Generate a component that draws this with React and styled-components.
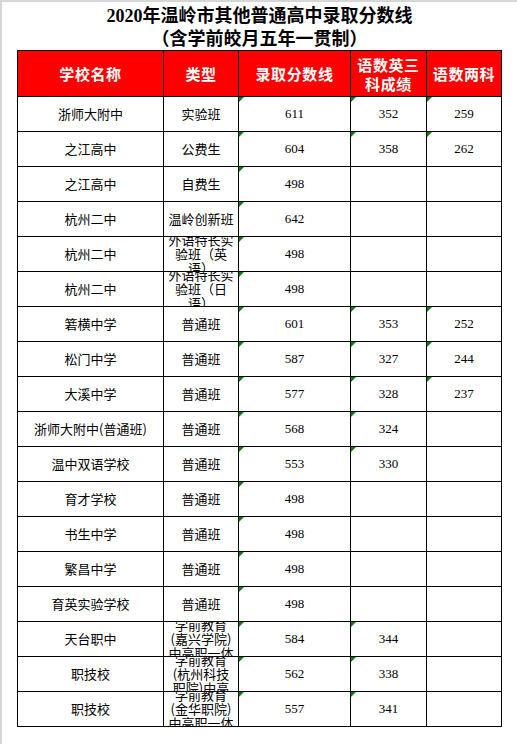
import styled, { createGlobalStyle } from 'styled-components';

const GlobalStyle = createGlobalStyle`
  html, body {
    margin: 0;
    background: #fff;
  }
  body {
    font-family: 'Noto Sans CJK SC', sans-serif;
  }
`;

const Page = styled.div`
  width: 517px;
  height: 744px;
  box-sizing: border-box;
  border-top: 2px solid #d6d6d6;
  border-left: 2px solid #d6d6d6;
  padding-left: 15px;
  background: #fff;
`;

const Title = styled.div`
  width: 485px;
  height: 48px;
  padding-top: 3px;
  box-sizing: border-box;
  text-align: center;
  font-family: 'Liberation Serif', 'Noto Sans CJK SC', serif;
  font-weight: bold;
  font-size: 18px;
  line-height: 23px;
  color: #000;
`;

const Sheet = styled.div`
  display: grid;
  width: 485px;
  box-sizing: border-box;
  grid-template-columns: 146px 75px 112px 76px 75px;
  grid-template-rows: 46px repeat(18, 35px);
  border-top: 1px solid #000;
  border-left: 1px solid #000;
`;

const HeadCell = styled.div`
  display: flex;
  flex-direction: column;
  align-items: center;
  justify-content: center;
  box-sizing: border-box;
  border-right: 1px solid #000;
  border-bottom: 1px solid #000;
  background: #ff0000;
  color: #fff;
  font-weight: bold;
  font-size: 15px;
  letter-spacing: 0.6px;
  line-height: 19px;
  text-align: center;
`;

const Cell = styled.div`
  position: relative;
  overflow: hidden;
  display: flex;
  flex-direction: column;
  align-items: center;
  justify-content: center;
  box-sizing: border-box;
  border-right: 1px solid #000;
  border-bottom: 1px solid #000;
  color: #000;
  font-family: ${(p) => (p.$num ? "'Liberation Serif', serif" : "'Noto Sans CJK SC', sans-serif")};
  font-size: 13px;
  line-height: 14px;

  &::before {
    content: '';
    display: ${(p) => (p.$flag ? 'block' : 'none')};
    position: absolute;
    top: 0;
    left: 0;
    border-top: 5px solid #0a7f0a;
    border-right: 5px solid transparent;
  }
`;

const Line = styled.span`
  display: block;
  white-space: nowrap;
`;

const rows = [
  { school: '浙师大附中', type: ['实验班'], score: '611', three: '352', two: '259' },
  { school: '之江高中', type: ['公费生'], score: '604', three: '358', two: '262' },
  { school: '之江高中', type: ['自费生'], score: '498' },
  { school: '杭州二中', type: ['温岭创新班'], score: '642' },
  { school: '杭州二中', type: ['外语特长实', '验班（英', '语）'], score: '498' },
  { school: '杭州二中', type: ['外语特长实', '验班（日', '语）'], score: '498' },
  { school: '箬横中学', type: ['普通班'], score: '601', three: '353', two: '252' },
  { school: '松门中学', type: ['普通班'], score: '587', three: '327', two: '244' },
  { school: '大溪中学', type: ['普通班'], score: '577', three: '328', two: '237' },
  { school: '浙师大附中(普通班)', type: ['普通班'], score: '568', three: '324' },
  { school: '温中双语学校', type: ['普通班'], score: '553', three: '330' },
  { school: '育才学校', type: ['普通班'], score: '498' },
  { school: '书生中学', type: ['普通班'], score: '498' },
  { school: '繁昌中学', type: ['普通班'], score: '498' },
  { school: '育英实验学校', type: ['普通班'], score: '498' },
  { school: '天台职中', type: ['学前教育', '(嘉兴学院)', '中高职一体'], score: '584', three: '344' },
  { school: '职技校', type: ['学前教育', '(杭州科技', '职院)中高'], score: '562', three: '338' },
  { school: '职技校', type: ['学前教育', '(金华职院)', '中高职一体'], score: '557', three: '341' },
];

const App = () => {
  return (
    <Page>
      <GlobalStyle />
      <Title>
        2020年温岭市其他普通高中录取分数线
        <br />
        （含学前皎月五年一贯制）
      </Title>
      <Sheet>
        <HeadCell>学校名称</HeadCell>
        <HeadCell>类型</HeadCell>
        <HeadCell>录取分数线</HeadCell>
        <HeadCell>
          <Line>语数英三</Line>
          <Line>科成绩</Line>
        </HeadCell>
        <HeadCell>语数两科</HeadCell>

        {rows.map((r, i) => [
          <Cell key={`s${i}`}>{r.school}</Cell>,
          <Cell key={`t${i}`}>
            {r.type.map((l) => (
              <Line key={l}>{l}</Line>
            ))}
          </Cell>,
          <Cell key={`a${i}`} $num $flag>
            {r.score}
          </Cell>,
          <Cell key={`b${i}`} $num $flag={!!r.three}>
            {r.three}
          </Cell>,
          <Cell key={`c${i}`} $num $flag={!!r.two}>
            {r.two}
          </Cell>,
        ])}
      </Sheet>
    </Page>
  );
};

export default App;
